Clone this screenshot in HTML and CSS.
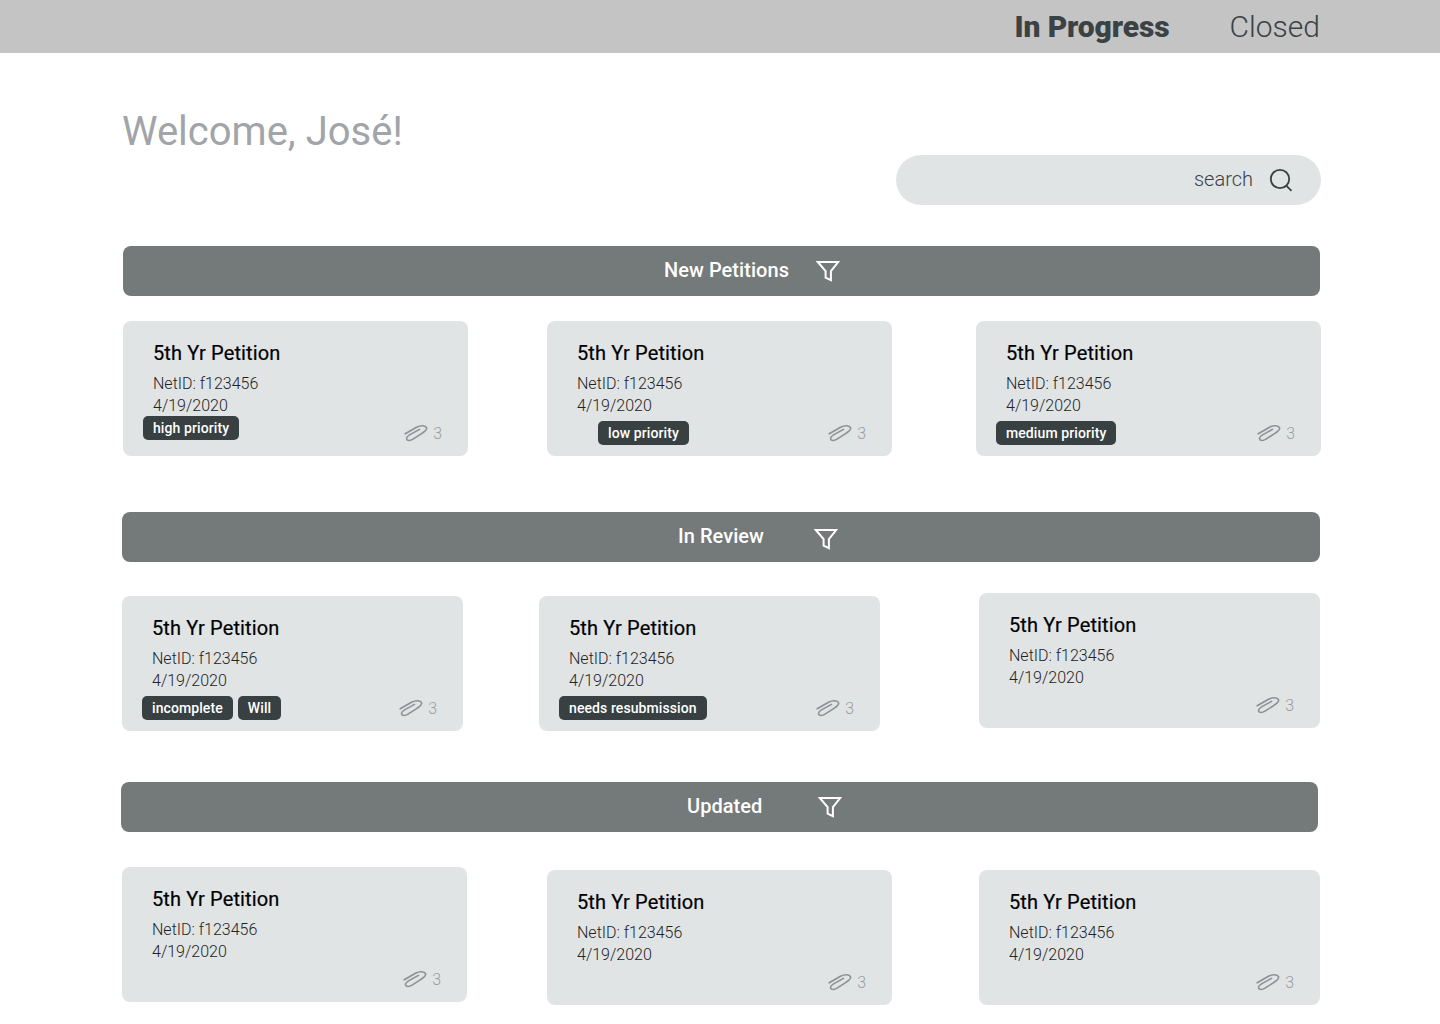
FILE: index.html
```html
<!DOCTYPE html>
<html lang="en">
<head>
<meta charset="utf-8">
<title>Petitions</title>
<link rel="stylesheet" href="styles.css">
</head>
<body>
<svg class="defs" width="0" height="0" aria-hidden="true">
  <symbol id="clip" viewBox="0 0 24 18">
    <path d="M1.2 9.8 12.5 3.2C16.8 1 21.6 1.4 22.5 3.6 23.3 5.8 20.8 7.6 18 9.3L9 15.2C6.2 17 3.2 17 2.6 15 2.1 13.2 4 11.8 6.4 10.4L15.5 5.4" fill="none" stroke="currentColor" stroke-width="1.6" stroke-linecap="round" stroke-linejoin="round"/>
  </symbol>
  <symbol id="funnel" viewBox="0 0 24 22">
    <path d="M1.8 2H22.2L14.9 11.2V20.2L9.6 17.6V11.2Z" fill="none" stroke="currentColor" stroke-width="2"/>
  </symbol>
</svg>

<header class="topbar">
  <a class="tab tab-active">In Progress</a>
  <a class="tab">Closed</a>
</header>

<main class="page">
  <h1 class="welcome">Welcome, José!</h1>
  <div class="search-row">
    <div class="search">
      <span class="search-label">search</span>
      <svg class="search-icon" viewBox="0 0 24 24"><circle cx="11" cy="11" r="9.2" fill="none" stroke="currentColor" stroke-width="1.8"/><path d="M17.5 17.8 22.5 22.8" fill="none" stroke="currentColor" stroke-width="1.8"/></svg>
    </div>
  </div>

  <section class="bar bar-new"><h2 class="bar-title">New Petitions</h2><svg class="funnel"><use href="#funnel"/></svg></section>
  <div class="row row-new">
    <article class="card card-w">
      <h3 class="card-title">5th Yr Petition</h3><p class="meta">NetID: f123456</p><p class="meta">4/19/2020</p>
      <div class="foot"><div class="tags tags-out tags-up"><span class="tag">high priority</span></div><div class="att"><svg class="clip"><use href="#clip"/></svg><span>3</span></div></div>
    </article>
    <article class="card card-w gap-79">
      <h3 class="card-title">5th Yr Petition</h3><p class="meta">NetID: f123456</p><p class="meta">4/19/2020</p>
      <div class="foot"><div class="tags tags-in"><span class="tag">low priority</span></div><div class="att"><svg class="clip"><use href="#clip"/></svg><span>3</span></div></div>
    </article>
    <article class="card card-w gap-84">
      <h3 class="card-title">5th Yr Petition</h3><p class="meta">NetID: f123456</p><p class="meta">4/19/2020</p>
      <div class="foot"><div class="tags tags-out"><span class="tag">medium priority</span></div><div class="att"><svg class="clip"><use href="#clip"/></svg><span>3</span></div></div>
    </article>
  </div>

  <section class="bar bar-review"><h2 class="bar-title">In Review</h2><svg class="funnel"><use href="#funnel"/></svg></section>
  <div class="row row-review">
    <article class="card card-n">
      <h3 class="card-title">5th Yr Petition</h3><p class="meta">NetID: f123456</p><p class="meta">4/19/2020</p>
      <div class="foot"><div class="tags tags-out"><span class="tag">incomplete</span><span class="tag">Will</span></div><div class="att"><svg class="clip"><use href="#clip"/></svg><span>3</span></div></div>
    </article>
    <article class="card card-n gap-76">
      <h3 class="card-title">5th Yr Petition</h3><p class="meta">NetID: f123456</p><p class="meta">4/19/2020</p>
      <div class="foot"><div class="tags tags-out"><span class="tag">needs resubmission</span></div><div class="att"><svg class="clip"><use href="#clip"/></svg><span>3</span></div></div>
    </article>
    <article class="card card-n gap-99 raise-3">
      <h3 class="card-title">5th Yr Petition</h3><p class="meta">NetID: f123456</p><p class="meta">4/19/2020</p>
      <div class="foot"><div class="att"><svg class="clip"><use href="#clip"/></svg><span>3</span></div></div>
    </article>
  </div>

  <section class="bar bar-updated"><h2 class="bar-title">Updated</h2><svg class="funnel"><use href="#funnel"/></svg></section>
  <div class="row row-updated">
    <article class="card card-w raise-3">
      <h3 class="card-title">5th Yr Petition</h3><p class="meta">NetID: f123456</p><p class="meta">4/19/2020</p>
      <div class="foot"><div class="att"><svg class="clip"><use href="#clip"/></svg><span>3</span></div></div>
    </article>
    <article class="card card-w gap-80">
      <h3 class="card-title">5th Yr Petition</h3><p class="meta">NetID: f123456</p><p class="meta">4/19/2020</p>
      <div class="foot"><div class="att"><svg class="clip"><use href="#clip"/></svg><span>3</span></div></div>
    </article>
    <article class="card card-n gap-87">
      <h3 class="card-title">5th Yr Petition</h3><p class="meta">NetID: f123456</p><p class="meta">4/19/2020</p>
      <div class="foot"><div class="att"><svg class="clip"><use href="#clip"/></svg><span>3</span></div></div>
    </article>
  </div>
</main>
</body>
</html>
```

FILE: styles.css
```css
* { box-sizing: border-box; }
html, body { margin: 0; padding: 0; background: #fff; }
body { font-family: Roboto, "Liberation Sans", sans-serif; height: 1024px; overflow: hidden; }
.defs { position: absolute; }

.topbar { height: 53px; background: #c4c4c4; display: flex; justify-content: flex-end; align-items: center; gap: 60px; padding-right: 120px; }
.tab { font-size: 30px; font-weight: 300; color: #3a4244; line-height: 53px; }
.tab-active { font-weight: 900; letter-spacing: -0.1px; }

.page { padding-left: 122px; width: 1440px; }
.welcome { margin: 0; padding-top: 55px; font-size: 40px; line-height: 48px; font-weight: 400; color: #a1a4a8; height: 102px; }
.search-row { display: flex; padding-left: 774px; }
.search { width: 425px; height: 50px; border-radius: 25px; background: #e1e4e5; display: flex; align-items: center; justify-content: flex-end; gap: 16px; padding: 0 28px 2px 0; }
.search-label { font-size: 20px; font-weight: 300; color: #3a4244; }
.search-icon { width: 24px; height: 24px; color: #3a4244; margin-top: 2px; }

.bar { height: 50px; border-radius: 8px; background: #74797a; display: flex; align-items: center; color: #fff; }
.bar-title { margin: 0 0 2px; font-size: 20px; font-weight: 500; line-height: 24px; letter-spacing: 0.05px; }
.funnel { width: 24px; height: 22px; color: #fff; }
.bar-new { margin: 41px 0 0 1px; width: 1197px; padding-left: 541px; gap: 27px; }
.bar-review { margin: 0; width: 1198px; padding-left: 556px; gap: 50px; }
.bar-review .funnel { margin-top: 3px; }
.bar-updated { margin: 0 0 0 -1px; width: 1197px; padding-left: 566px; gap: 56px; }

.row { display: flex; align-items: flex-start; }
.row-new { margin: 25px 0 56px 1px; }
.row-review { margin: 34px 0 51px; }
.row-updated { margin: 38px 0 0; }

.card { height: 135px; border-radius: 8px; background: #e1e4e5; padding: 20px 26px 11px 30px; display: flex; flex-direction: column; }
.card-w { width: 345px; }
.card-n { width: 341px; }
.gap-76 { margin-left: 76px; }
.gap-79 { margin-left: 79px; }
.gap-80 { margin-left: 80px; }
.gap-84 { margin-left: 84px; }
.gap-87 { margin-left: 87px; }
.gap-99 { margin-left: 99px; }
.raise-3 { margin-top: -3px; }

.card-title { margin: 0 0 8px; font-size: 20px; line-height: 24px; font-weight: 400; color: #000; -webkit-text-stroke: 0.2px #000; letter-spacing: 0.13px; }
.meta { margin: 0; font-size: 16px; line-height: 22px; font-weight: 300; color: #1e2324; }

.foot { margin-top: auto; display: flex; align-items: center; justify-content: space-between; height: 24px; }
.tags { display: flex; gap: 5px; }
.tags-out { margin-left: -10px; }
.tags-in { margin-left: 21px; }
.tags-up { margin-top: -10px; }
.tag { height: 24px; line-height: 24px; padding: 0 10px; border-radius: 5px; background: #384042; color: #fff; font-size: 14px; font-weight: 500; white-space: nowrap; letter-spacing: 0.09px; }

.att { margin-left: auto; display: flex; align-items: center; gap: 5px; font-size: 16px; font-weight: 300; color: #9a9ea0; }
.clip { width: 24px; height: 18px; color: #8d9193; }
```
